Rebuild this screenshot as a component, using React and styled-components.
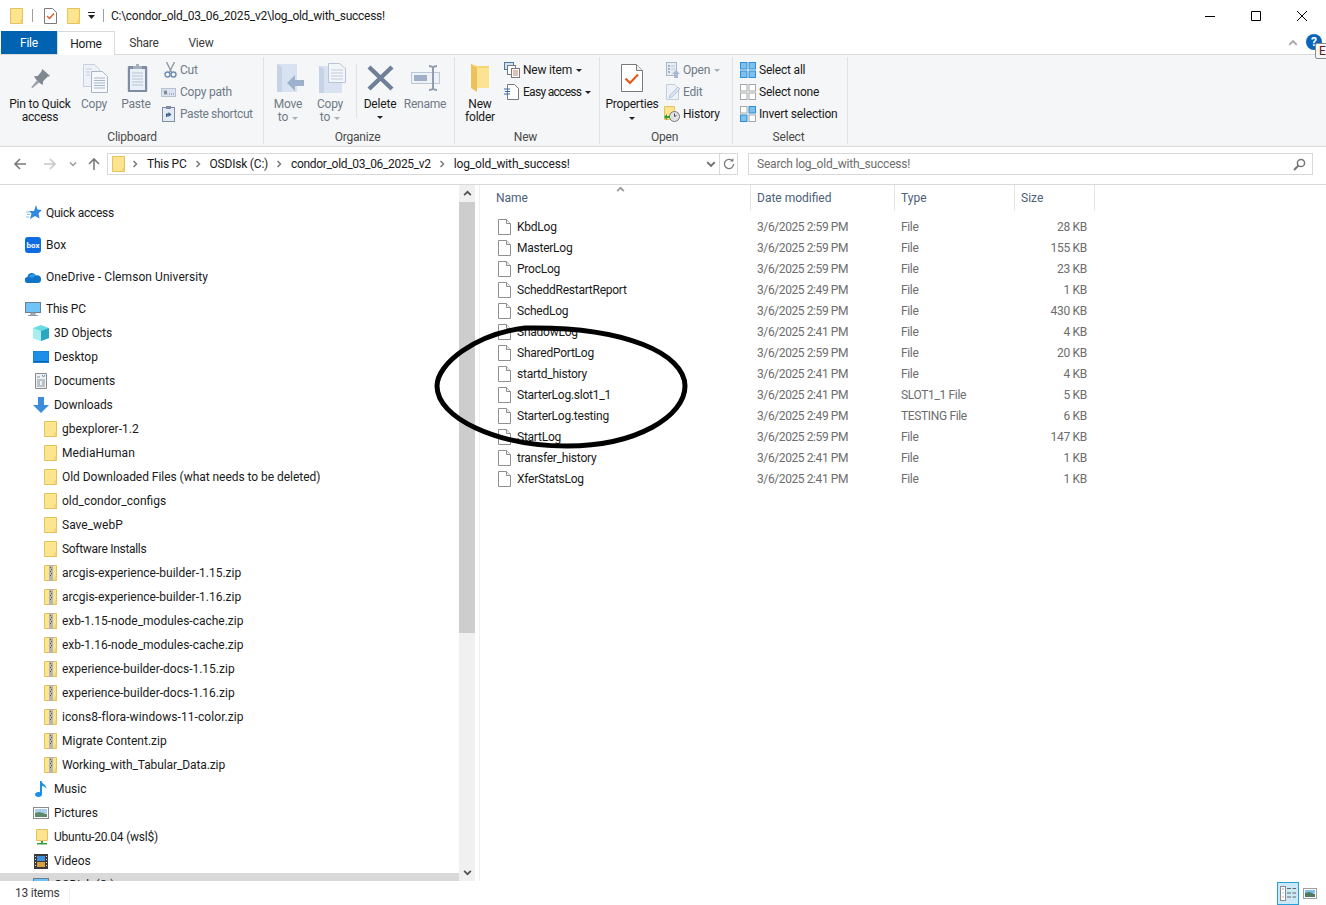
import React from 'react';
import styled, { createGlobalStyle } from 'styled-components';

const GlobalStyle = createGlobalStyle`
  html, body {
    margin: 0;
    padding: 0;
    background: #fff;
    overflow: hidden;
  }
  body {
    font-family: Roboto, "Liberation Sans", sans-serif;
    font-size: 12px;
    color: #1a1a1a;
  }
`;

const Window = styled.div`
  position: relative;
  width: 1326px;
  height: 905px;
  display: flex;
  flex-direction: column;
  overflow: hidden;
  background: #fff;
`;

/* title bar */
const TitleBar = styled.div`
  height: 31px;
  display: flex;
  align-items: center;
  padding-left: 10px;
`;

const QuickIcon = styled.span`
  display: flex;
  margin-right: ${p => p.$gap}px;
`;

const TitleSep = styled.span`
  width: 1px;
  height: 13px;
  background: #a0a0a0;
  margin-right: ${p => p.$gap}px;
`;

const TitleText = styled.span`
  font-size: 12px;
  color: #1a1a1a;
  letter-spacing: -0.27px;
  flex: 1;
`;

const WinButtons = styled.div`
  display: flex;
  align-items: center;
  height: 31px;
  margin-right: 1px;
`;

const WinButton = styled.span`
  width: 46px;
  height: 31px;
  display: flex;
  align-items: center;
  justify-content: center;
`;

/* tabs */
const TabRow = styled.div`
  height: 24px;
  display: flex;
  align-items: stretch;
  padding-left: 1px;
  border-bottom: 1px solid #dadbdc;
  box-sizing: border-box;
  letter-spacing: -0.2px;
`;

const FileTab = styled.div`
  width: 56px;
  height: 23px;
  padding-top: 1px;
  box-sizing: border-box;
  background: #0063b1;
  color: #fff;
  display: flex;
  align-items: center;
  justify-content: center;
`;

const Tab = styled.div`
  width: ${p => p.$w}px;
  height: ${p => (p.$active ? 24 : 23)}px;
  box-sizing: border-box;
  display: flex;
  align-items: center;
  justify-content: center;
  color: ${p => (p.$active ? '#1a1a1a' : '#3b3b3b')};
  background: #fff;
  padding-top: ${p => (p.$active ? 0 : 1)}px;
  ${p => (p.$active ? 'border: 1px solid #dadbdc; border-bottom: 0;' : '')}
  position: relative;
`;

const TabSpacer = styled.div`
  flex: 1;
`;

const CollapseChevron = styled.span`
  display: flex;
  align-items: center;
  margin-right: 28px;
  height: 23px;
`;

/* ribbon */
const Ribbon = styled.div`
  height: 92px;
  background: #f5f6f7;
  border-bottom: 1px solid #dadbdc;
  box-sizing: border-box;
  display: flex;
  padding: 2px 0 0 1px;
  letter-spacing: -0.2px;
`;

const Group = styled.div`
  width: ${p => p.$w}px;
  height: 87px;
  box-sizing: border-box;
  border-right: 1px solid #e1e2e3;
  margin-right: 1px;
  display: flex;
  flex-direction: column;
`;

const GroupBody = styled.div`
  height: 71px;
  display: flex;
  padding-left: ${p => p.$pad || 0}px;
`;

const GroupLabel = styled.div`
  flex: 1;
  display: flex;
  align-items: center;
  justify-content: center;
  color: #4a4a4a;
  padding: 1px ${p => p.$pr || 0}px 0 0;
`;

const LargeButton = styled.div`
  width: ${p => p.$w}px;
  display: flex;
  flex-direction: column;
  align-items: center;
  color: ${p => (p.$off ? '#6f7a87' : '#1a1a1a')};
  line-height: 13px;
  text-align: center;
  white-space: nowrap;
  padding-top: 3px;
  flex: none;
`;

const LargeIcon = styled.span`
  height: 36px;
  display: flex;
  align-items: center;
  justify-content: center;
  flex: none;
  margin: 0 0 2px ${p => p.$dx || 0}px;
`;

const VSep = styled.span`
  width: 1px;
  height: 54px;
  margin: 7px 0 0 5px;
  background: #e1e2e3;
  flex: none;
`;

const SmallStack = styled.div`
  display: flex;
  flex-direction: column;
  padding-top: 2px;
  margin-left: ${p => p.$ml || 0}px;
`;

const SmallButton = styled.div`
  height: 22px;
  display: flex;
  align-items: center;
  white-space: nowrap;
  color: ${p => (p.$off ? '#6f7a87' : '#1a1a1a')};
  letter-spacing: ${p => p.$ls || -0.2}px;
`;

const SmallIcon = styled.span`
  width: ${p => p.$w || 19}px;
  box-sizing: border-box;
  padding-left: ${p => p.$in || 0}px;
  display: flex;
  align-items: center;
`;

const Caret = styled.span`
  display: inline-block;
  width: 0;
  height: 0;
  border-left: 3px solid transparent;
  border-right: 3px solid transparent;
  border-top: 3px solid ${p => p.$c || '#222'};
  margin: ${p => p.$m || '0 0 0 4px'};
`;

/* address row */
const AddressRow = styled.div`
  height: 38px;
  display: flex;
  align-items: flex-start;
  padding: 6px 13px 0 0;
  border-bottom: 1px solid #d9d9d9;
  box-sizing: border-box;
`;

const NavIcons = styled.div`
  width: 107px;
  height: 22px;
  display: flex;
  align-items: center;
  flex: none;
`;

const NavIcon = styled.span`
  display: flex;
  margin-left: ${p => p.$ml}px;
`;

const AddressBox = styled.div`
  width: 631px;
  height: 22px;
  box-sizing: border-box;
  border: 1px solid #d9d9d9;
  display: flex;
  align-items: center;
  padding-left: 4px;
  flex: none;
`;

const Crumb = styled.span`
  color: #1a1a1a;
  white-space: nowrap;
  letter-spacing: ${p => p.$ls}px;
  margin-right: ${p => p.$mr}px;
`;

const CrumbArrow = styled.span`
  display: flex;
  margin: ${p => p.$m};
`;

const AddressEnd = styled.span`
  margin-left: auto;
  display: flex;
  align-items: center;
  height: 20px;
`;

const RefreshCell = styled.span`
  width: 18px;
  height: 20px;
  box-sizing: border-box;
  border-left: 1px solid #d9d9d9;
  margin-left: 3px;
  display: flex;
  align-items: center;
  justify-content: center;
`;

const SearchBox = styled.div`
  margin-left: 10px;
  flex: 1;
  height: 22px;
  box-sizing: border-box;
  border: 1px solid #d9d9d9;
  display: flex;
  align-items: center;
  justify-content: space-between;
  padding: 0 6px 0 8px;
  color: #6d6d6d;
  letter-spacing: -0.2px;
`;

/* body */
const Body = styled.div`
  height: 696px;
  display: flex;
`;

const NavPane = styled.div`
  width: 459px;
  height: 696px;
  overflow: hidden;
  flex: none;
  padding-top: 16px;
  box-sizing: border-box;
  position: relative;
`;

const NavRow = styled.div`
  height: 24px;
  display: flex;
  align-items: center;
  white-space: nowrap;
  padding-left: ${p => p.$indent}px;
  margin-top: ${p => p.$top || 0}px;
  background: ${p => (p.$selected ? '#d9d9d9' : 'transparent')};
  color: #1a1a1a;
  letter-spacing: ${p => p.$ls || 0}px;
`;

const NavGlyph = styled.span`
  width: ${p => p.$w}px;
  height: 16px;
  display: flex;
  align-items: center;
  flex: none;
`;

const Scrollbar = styled.div`
  width: 16px;
  flex: none;
  background: #f0f0f0;
  display: flex;
  flex-direction: column;
  border-right: 2px solid #fff;
  box-shadow: 2px 0 0 #fff, 3px 0 0 #f0f0f0;
`;

const ScrollArrow = styled.div`
  height: 17px;
  display: flex;
  align-items: center;
  justify-content: center;
  flex: none;
  background: #f0f0f0;
`;

const ScrollThumb = styled.div`
  height: 431px;
  background: #cdcdcd;
  flex: none;
`;

const ScrollTrack = styled.div`
  flex: 1;
`;

const ListPane = styled.div`
  flex: 1;
  padding-left: 13px;
  position: relative;
`;

const ListHeader = styled.div`
  height: 31px;
  display: grid;
  grid-template-columns: 261px 144px 120px 80px;
`;

const HeaderCell = styled.div`
  height: 25px;
  box-sizing: border-box;
  padding-left: 6px;
  padding-top: 6px;
  color: #4c607a;
  border-right: 1px solid #e5e5e5;
  position: relative;
`;

const SortChevron = styled.span`
  position: absolute;
  left: 126px;
  top: 0;
  display: flex;
`;

const FileRow = styled.div`
  height: 21px;
  display: grid;
  grid-template-columns: 261px 144px 120px 72px;
  align-items: center;
  color: #6d6d6d;
`;

const FileName = styled.div`
  display: flex;
  align-items: center;
  color: #1a1a1a;
  padding-left: 8px;
  letter-spacing: -0.24px;
`;

const FileGlyph = styled.span`
  width: 19px;
  display: flex;
  flex: none;
`;

const FileCell = styled.div`
  padding-left: 6px;
  letter-spacing: ${p => p.$ls || 0}px;
`;

const SizeCell = styled.div`
  text-align: right;
  letter-spacing: -0.3px;
`;

/* hand drawn ring, sits over the file list */
const Scribble = styled.svg`
  position: absolute;
  left: 425px;
  top: 320px;
  pointer-events: none;
`;

/* status bar */
const StatusBar = styled.div`
  flex: 1;
  display: flex;
  align-items: center;
  padding-left: 15px;
  color: #3b3b3b;
  position: relative;
`;

const StatusCount = styled.span`
  letter-spacing: -0.25px;
`;

const StatusSep = styled.span`
  width: 1px;
  height: 16px;
  background: #f0f0f0;
  margin: 3px 0 0 10px;
`;

const ViewSwitch = styled.div`
  margin-left: auto;
  margin-right: 9px;
  display: flex;
  align-items: center;
  gap: 4px;
`;

const ViewButton = styled.span`
  width: ${p => (p.$active ? 22 : 14)}px;
  height: ${p => (p.$active ? 23 : 11)}px;
  box-sizing: border-box;
  display: flex;
  align-items: center;
  justify-content: center;
  ${p => (p.$active ? 'border: 1px solid #26a0da; background: #cbe8f6;' : '')}
`;

const HelpBadge = styled.span`
  position: absolute;
  left: 1306px;
  top: 34px;
  width: 16px;
  height: 16px;
  border-radius: 50%;
  background: #0a64b8;
  color: #fff;
  font-weight: 700;
  font-size: 12px;
  line-height: 16px;
  text-align: center;
`;

const TipBox = styled.span`
  position: absolute;
  left: 1315px;
  top: 43px;
  width: 14px;
  height: 16px;
  box-sizing: border-box;
  background: #f7f7f7;
  border: 1px solid #8a8a8a;
  border-radius: 2px;
  color: #5a2020;
  font-size: 12px;
  line-height: 14px;
  padding-left: 3px;
`;

/* icons */
const Folder = ({ s = 1 }) => (
  <svg width={13 * s} height={16 * s} viewBox="0 0 13 16">
    <path d="M.5.5h12v15H.5z" fill="#fde58f" stroke="#e6c25c" />
    <path d="M10.5 11.5h2v4h-2z" fill="#f2cf6d" />
  </svg>
);

const TitleDoc = () => (
  <svg width="13" height="16" viewBox="0 0 13 16">
    <path d="M.5.5h8l4 4v11H.5z" fill="#fff" stroke="#7a7a7a" />
    <path d="M3 8l2.5 2.5L10 5.5" fill="none" stroke="#e2572b" strokeWidth="1.4" />
  </svg>
);

const ZipFolder = () => (
  <svg width="13" height="16" viewBox="0 0 13 16">
    <path d="M.5.5h12v15H.5z" fill="#fde58f" stroke="#e6c25c" />
    <path d="M5 0h4v16H5z" fill="#b4b4b4" />
    <path d="M6 2h1v1H6zm1 2h1v1H7zM6 6h1v1H6zm1 2h1v1H7zm-1 2h1v1H6z" fill="#555" />
    <path d="M10.5 11.5h2v4h-2z" fill="#f2cf6d" />
  </svg>
);

const FileIcon = () => (
  <svg width="13" height="16" viewBox="0 0 13 16">
    <path d="M.5.5h8l4 4v11H.5z" fill="#fff" stroke="#8f8f8f" />
    <path d="M8.5.5v4h4" fill="#f0f0f0" stroke="#8f8f8f" />
  </svg>
);

const Chevron = ({ dir = 'right', c = '#7a7a7a', size = 8 }) => {
  const paths = {
    right: 'M2.5 1L5.5 4l-3 3',
    down: 'M1 2.5L4 5.5l3-3',
    up: 'M1 5.5L4 2.5l3 3',
  };
  return (
    <svg width={size} height={size} viewBox="0 0 8 8">
      <path d={paths[dir]} fill="none" stroke={c} strokeWidth="1.5" />
    </svg>
  );
};

const Arrow = ({ c, rot = 0 }) => (
  <svg width="14" height="14" viewBox="0 0 14 14" style={{ transform: `rotate(${rot}deg)` }}>
    <path d="M13 7H2M7 2L2 7l5 5" fill="none" stroke={c} strokeWidth="1.6" />
  </svg>
);

const PinIcon = () => (
  <svg width="21" height="21" viewBox="0 0 24 24">
    <path d="M14 1l9 8-3 1-5 5-.5 4.500L11 17l-4-4-2.500-3.500L9 9l4-5z" fill="#7f8890" />
    <path d="M8 14l-6.500 8 1 1 8-6.500z" fill="#9aa1a8" />
  </svg>
);

const CopyIcon = () => (
  <svg width="25" height="29" viewBox="0 0 25 29">
    <path d="M.5.500h11l5 5v17H.5z" fill="#eef2f8" stroke="#c6d0de" />
    <path d="M8.500 7.500h11l5 5v16h-16z" fill="#f6f8fb" stroke="#a9b6c8" />
    <path d="M11 14h11M11 16.500h11M11 19h11M11 21.500h11M11 24h11" stroke="#a9b6c8" />
    <path d="M3 5h6M3 8h4M3 11h4" stroke="#c6d0de" />
  </svg>
);

const PasteIcon = () => (
  <svg width="21" height="30" viewBox="0 0 21 30">
    <rect x=".8" y="3" width="19.400" height="26" rx="1" fill="#7e8da4" />
    <rect x="3" y="6" width="15" height="21" fill="#eaf0f8" />
    <path d="M5 10h11M5 13h11M5 16h11M5 19h11M5 22h11" stroke="#b5c3d6" />
    <path d="M6 6V3h3V1h3v2h3v3z" fill="#a4aebd" />
  </svg>
);

const CutIcon = () => (
  <svg width="13" height="16" viewBox="0 0 13 16">
    <path d="M2.500 0l5 10M10.500 0l-5 10" stroke="#8f98a3" strokeWidth="1.400" />
    <circle cx="3.500" cy="12.500" r="2.500" fill="none" stroke="#6f8db3" strokeWidth="1.400" />
    <circle cx="9.500" cy="12.500" r="2.500" fill="none" stroke="#6f8db3" strokeWidth="1.400" />
  </svg>
);

const CopyPathIcon = () => (
  <svg width="15" height="9" viewBox="0 0 15 9">
    <rect x=".5" y=".5" width="14" height="8" fill="#dbe4f0" stroke="#b6c2d2" />
    <path d="M3 2.500l1 4 1-4 1 4M8 6h1M10 6h1M12 6h1" stroke="#5a6a7e" fill="none" strokeWidth=".8" />
  </svg>
);

const PasteShortcutIcon = () => (
  <svg width="13" height="16" viewBox="0 0 13 16">
    <rect x=".5" y="1.500" width="12" height="14" fill="#e3eaf4" stroke="#7e8da4" />
    <path d="M4 0h5v3H4z" fill="#7e8da4" />
    <path d="M4 11V7.500h2.500V6l3 2.500-3 2.500V9.500H5.500V11z" fill="#3f5f88" />
  </svg>
);

const MoveIcon = () => (
  <svg width="27" height="28" viewBox="0 0 27 28">
    <path d="M0 0h20v28H0z" fill="#d8e2f0" />
    <path d="M0 0l5 3v25H0z" fill="#c6d3e6" />
    <path d="M10 19l8-8v5h9v6h-9v5z" fill="#9eb1ca" />
  </svg>
);

const CopyToIcon = () => (
  <svg width="27" height="30" viewBox="0 0 27 30">
    <path d="M0 3h23v27H0z" fill="#d8e2f0" />
    <path d="M0 3l5 3v24H0z" fill="#c6d3e6" />
    <path d="M9.500.500h11l6 5v14h-17z" fill="#f2f5fa" stroke="#b9c5d6" />
    <path d="M12 7h12M12 10h12M12 13h12M12 16h12" stroke="#c2cddc" />
  </svg>
);

const DeleteIcon = () => (
  <svg width="27" height="26" viewBox="0 0 27 26">
    <path d="M2 2l23 22M25 2L2 24" stroke="#6f7f97" strokeWidth="4.400" />
  </svg>
);

const RenameIcon = () => (
  <svg width="29" height="26" viewBox="0 0 29 26">
    <rect x=".5" y="7.500" width="28" height="11" fill="#eef2f7" stroke="#bcc8d8" />
    <rect x="3" y="10" width="13" height="6" fill="#9fb0c8" />
    <path d="M18 1c2 0 3 1 4 1s2-1 4-1M18 25c2 0 3-1 4-1s2 1 4 1M22 2v22" fill="none" stroke="#8f9cb0" strokeWidth="2" />
  </svg>
);

const NewFolderIcon = () => (
  <svg width="18" height="28" viewBox="0 0 18 28">
    <path d="M0 0l6 2h12v22H0z" fill="#f7d774" />
    <path d="M0 0l6 4v24l-6-4z" fill="#eec25a" />
    <path d="M6 4h12v20H6z" fill="#fbe391" />
  </svg>
);

const NewItemIcon = () => (
  <svg width="16" height="16" viewBox="0 0 16 16">
    <rect x=".5" y=".5" width="9" height="7" fill="#cfe3f5" stroke="#4a7ba7" />
    <rect x="3.500" y="3.500" width="8" height="9" fill="#fff" stroke="#7a7a7a" />
    <rect x="7.500" y="6.500" width="8" height="9" fill="#fff" stroke="#7a7a7a" />
    <path d="M9 9h5M9 11h5M9 13h5" stroke="#d07a6a" />
  </svg>
);

const EasyAccessIcon = () => (
  <svg width="15" height="16" viewBox="0 0 15 16">
    <path d="M3.500.500h7l4 4v11h-11z" fill="#fff" stroke="#7a7a7a" />
    <path d="M0 5h6M1 7.500h5M0 10h6" stroke="#2f6ea8" />
  </svg>
);

const PropertiesIcon = () => (
  <svg width="22" height="28" viewBox="0 0 22 28">
    <path d="M.5.500h15l6 6v21H.5z" fill="#fff" stroke="#7a7a7a" />
    <path d="M15.500.500v6h6" fill="#eee" stroke="#7a7a7a" />
    <path d="M4.500 14.500l4.500 4.500L17 10.500" fill="none" stroke="#e8591f" strokeWidth="2.200" />
  </svg>
);

const OpenIcon = () => (
  <svg width="14" height="16" viewBox="0 0 14 16">
    <rect x=".5" y=".5" width="10" height="13" fill="#e8edf4" stroke="#a9b6c8" />
    <path d="M2 3h2v2H2zm0 3h2v2H2zm0 3h2v2H2z" fill="#9fb0c8" />
    <path d="M5 4h4M5 7h4" stroke="#b9c5d6" />
    <path d="M10 8l4 4h-2v4H8v-4H6z" fill="#a9bad0" />
  </svg>
);

const EditIcon = () => (
  <svg width="14" height="16" viewBox="0 0 14 16">
    <path d="M.5.500h8l4 4v11H.5z" fill="#edf2f8" stroke="#c3cedd" />
    <path d="M3 14l1-3 8-8 2 2-8 8z" fill="#d8e3f1" stroke="#a9b9cd" strokeWidth=".7" />
  </svg>
);

const HistoryIcon = () => (
  <svg width="16" height="16" viewBox="0 0 16 16">
    <path d="M.5.500h10v13H.5z" fill="#fde58f" stroke="#e6c25c" />
    <circle cx="10.500" cy="10.500" r="5" fill="#e3e3e3" stroke="#7a7a7a" />
    <path d="M10.500 7.500v3l2-1" fill="none" stroke="#555" />
    <path d="M0 11l3-3v2h3v2H3v2z" fill="#2f9e3f" />
  </svg>
);

const Grid = ({ cells }) => (
  <svg width="16" height="16" viewBox="0 0 16 16">
    {[[0, 0], [8.500, 0], [0, 8.500], [8.500, 8.500]].map(([x, y], i) => (
      <rect
        key={i}
        x={x + 0.5}
        y={y + 0.5}
        width="6.500"
        height="6.500"
        fill={cells[i] ? '#7cc0ee' : '#fff'}
        stroke={cells[i] ? '#2f8fd6' : '#a8a8a8'}
      />
    ))}
  </svg>
);

const RefreshIcon = () => (
  <svg width="12" height="12" viewBox="0 0 12 12">
    <path d="M9.500 3A4.600 4.600 0 1 0 10.600 6" fill="none" stroke="#7a7a7a" strokeWidth="1.300" />
    <path d="M7 3.400h3.400V0z" fill="#7a7a7a" />
  </svg>
);

const SearchIcon = () => (
  <svg width="13" height="13" viewBox="0 0 13 13">
    <circle cx="8" cy="5" r="3.600" fill="none" stroke="#757575" strokeWidth="1.500" />
    <path d="M5.500 7.500L1 12" stroke="#757575" strokeWidth="2" />
  </svg>
);

const StarIcon = () => (
  <svg width="16" height="16" viewBox="0 0 16 16">
    <path d="M10 0l1.500 4.500L16 5l-3.500 3.200 1 5.300L9 11l-5 3 1.500-5.500L3 6h5z" fill="#2f8ae0" />
    <path d="M0 7h4M1 9.500h3M0 12h3" stroke="#8fbce8" />
  </svg>
);

const BoxIcon = () => (
  <svg width="16" height="16" viewBox="0 0 16 16">
    <rect width="16" height="16" rx="3" fill="#0f6be0" />
    <text x="8" y="10.500" textAnchor="middle" fontSize="8" fontWeight="700" fontFamily="Roboto, sans-serif" fill="#fff">box</text>
  </svg>
);

const CloudIcon = () => (
  <svg width="16" height="11" viewBox="0 0 16 11">
    <path d="M3 11a3 3 0 0 1-.5-6A4.500 4.500 0 0 1 11 3.500 3.800 3.800 0 0 1 16 8c0 2-1.500 3-3 3z" fill="#0f74c8" />
    <path d="M4 5a4 4 0 0 1 7-1.500L7 6z" fill="#2c9ae8" />
  </svg>
);

const PcIcon = () => (
  <svg width="16" height="15" viewBox="0 0 16 15">
    <rect x=".5" y=".5" width="15" height="10" fill="#6fc3f5" stroke="#6b7f90" />
    <path d="M6 11h4v2H6zM3 13.500h10" stroke="#8a9aa8" fill="#b8c4cf" />
  </svg>
);

const CubeIcon = () => (
  <svg width="16" height="16" viewBox="0 0 16 16">
    <path d="M8 0l8 3v10l-8 3-8-3V3z" fill="#6adbe0" />
    <path d="M8 6l8-3v10l-8 3z" fill="#2ba7c2" />
    <path d="M0 3l8 3v10l-8-3z" fill="#a8eef0" />
  </svg>
);

const DesktopIcon = () => (
  <svg width="16" height="12" viewBox="0 0 16 12">
    <rect width="16" height="12" fill="#1e8fe8" />
    <path d="M.5 10.500h15" stroke="#0b5fb0" />
    <path d="M0 0h16v12H0z" fill="none" stroke="#0f74c8" />
  </svg>
);

const DocumentsIcon = () => (
  <svg width="12" height="16" viewBox="0 0 12 16">
    <path d="M.5.500h11v15H.5z" fill="#f2f2f2" stroke="#8a8a8a" />
    <path d="M2 4h3M2 7h8M2 9h3M7 9h3M2 11h3M7 11h3M2 13h8" stroke="#8094a8" />
    <path d="M7 2l1.500 2L10 2" stroke="#3f8fdc" fill="none" />
  </svg>
);

const DownloadIcon = () => (
  <svg width="16" height="16" viewBox="0 0 16 16">
    <path d="M5 0h6v8h5l-8 8-8-8h5z" fill="#3b8ddc" />
  </svg>
);

const MusicIcon = () => (
  <svg width="12" height="16" viewBox="0 0 12 16">
    <path d="M5 0h1.500c.5 3 5 3.500 5 8-1-2-3-3-4.500-3v8.500C7 15 5.500 16 3.500 16S0 15 0 13.500 1.500 11 3.500 11c.5 0 1 0 1.500.2z" fill="#1b8fe8" />
  </svg>
);

const PicturesIcon = () => (
  <svg width="16" height="12" viewBox="0 0 16 12">
    <rect x=".5" y=".5" width="15" height="11" fill="#fff" stroke="#8a8a8a" />
    <path d="M2 2h12v4H2z" fill="#a8d0ee" />
    <path d="M2 6l4-1 4 1 4 1v3H2z" fill="#5f8a6a" />
  </svg>
);

const DriveIcon = () => (
  <svg width="14" height="16" viewBox="0 0 14 16">
    <path d="M1.500.500h11v11h-11z" fill="#fde58f" stroke="#e6c25c" />
    <path d="M6 12h2v2H6zM2 14h10v1.500H2z" fill="#34a33a" />
  </svg>
);

const VideosIcon = () => (
  <svg width="14" height="15" viewBox="0 0 14 15">
    <rect width="14" height="15" fill="#3a3a3a" />
    <path d="M3 2h8v5H3z" fill="#3f8fdc" />
    <path d="M3 8h8v5H3z" fill="#d8a040" />
    <path d="M1 2h1v1H1zm0 3h1v1H1zm0 3h1v1H1zm0 3h1v1H1zm11-9h1v1h-1zm0 3h1v1h-1zm0 3h1v1h-1zm0 3h1v1h-1z" fill="#ddd" />
  </svg>
);

const DetailsViewIcon = () => (
  <svg width="16" height="15" viewBox="0 0 16 15">
    <rect x=".5" y=".5" width="5" height="14" fill="#fff" stroke="#8a8a8a" />
    <path d="M2.500 2.500h1v1h-1z" fill="#555" />
    <path d="M2.500 6.500h1v1h-1z" fill="#3f8fdc" />
    <path d="M2.500 10.500h1v1h-1z" fill="#d83a2a" />
    <path d="M7 2.500h4M12.500 2.500H16M7 7h4M12.500 7H16M7 11h4M12.500 11H16" stroke="#666" />
  </svg>
);

const LargeViewIcon = () => (
  <svg width="14" height="11" viewBox="0 0 14 11">
    <rect x=".5" y=".5" width="13" height="10" fill="#fff" stroke="#a0a0a0" />
    <path d="M2 2h10v3H2z" fill="#7cc0ee" />
    <path d="M2 5l4-1 6 2v3H2z" fill="#4f7a5f" />
  </svg>
);

const navItems = [
  { label: 'Quick access', indent: 26, w: 20, ls: -0.25, icon: <StarIcon /> },
  { label: 'Box', indent: 25, w: 21, top: 8, icon: <BoxIcon /> },
  { label: 'OneDrive - Clemson University', indent: 25, w: 21, top: 8, ls: 0.07, icon: <CloudIcon /> },
  { label: 'This PC', indent: 25, w: 21, top: 8, ls: -0.2, icon: <PcIcon /> },
  { label: '3D Objects', indent: 33, w: 21, icon: <CubeIcon /> },
  { label: 'Desktop', indent: 33, w: 21, icon: <DesktopIcon /> },
  { label: 'Documents', indent: 35, w: 19, icon: <DocumentsIcon /> },
  { label: 'Downloads', indent: 33, w: 21, ls: -0.1, icon: <DownloadIcon /> },
  { label: 'gbexplorer-1.2', indent: 44, w: 18, icon: <Folder /> },
  { label: 'MediaHuman', indent: 44, w: 18, ls: 0.1, icon: <Folder /> },
  { label: 'Old Downloaded Files (what needs to be deleted)', indent: 44, w: 18, ls: -0.04, icon: <Folder /> },
  { label: 'old_condor_configs', indent: 44, w: 18, icon: <Folder /> },
  { label: 'Save_webP', indent: 44, w: 18, icon: <Folder /> },
  { label: 'Software Installs', indent: 44, w: 18, ls: -0.3, icon: <Folder /> },
  { label: 'arcgis-experience-builder-1.15.zip', indent: 44, w: 18, icon: <ZipFolder /> },
  { label: 'arcgis-experience-builder-1.16.zip', indent: 44, w: 18, icon: <ZipFolder /> },
  { label: 'exb-1.15-node_modules-cache.zip', indent: 44, w: 18, icon: <ZipFolder /> },
  { label: 'exb-1.16-node_modules-cache.zip', indent: 44, w: 18, icon: <ZipFolder /> },
  { label: 'experience-builder-docs-1.15.zip', indent: 44, w: 18, icon: <ZipFolder /> },
  { label: 'experience-builder-docs-1.16.zip', indent: 44, w: 18, icon: <ZipFolder /> },
  { label: 'icons8-flora-windows-11-color.zip', indent: 44, w: 18, ls: 0.08, icon: <ZipFolder /> },
  { label: 'Migrate Content.zip', indent: 44, w: 18, icon: <ZipFolder /> },
  { label: 'Working_with_Tabular_Data.zip', indent: 44, w: 18, ls: -0.1, icon: <ZipFolder /> },
  { label: 'Music', indent: 35, w: 19, icon: <MusicIcon /> },
  { label: 'Pictures', indent: 33, w: 21, icon: <PicturesIcon /> },
  { label: 'Ubuntu-20.04 (wsl$)', indent: 35, w: 19, ls: -0.2, icon: <DriveIcon /> },
  { label: 'Videos', indent: 34, w: 20, icon: <VideosIcon /> },
  { label: 'OSDisk (C:)', indent: 33, w: 21, selected: true, icon: <PcIcon /> },
];

const files = [
  ['KbdLog', '3/6/2025 2:59 PM', 'File', '28 KB'],
  ['MasterLog', '3/6/2025 2:59 PM', 'File', '155 KB'],
  ['ProcLog', '3/6/2025 2:59 PM', 'File', '23 KB'],
  ['ScheddRestartReport', '3/6/2025 2:49 PM', 'File', '1 KB'],
  ['SchedLog', '3/6/2025 2:59 PM', 'File', '430 KB'],
  ['ShadowLog', '3/6/2025 2:41 PM', 'File', '4 KB'],
  ['SharedPortLog', '3/6/2025 2:59 PM', 'File', '20 KB'],
  ['startd_history', '3/6/2025 2:41 PM', 'File', '4 KB'],
  ['StarterLog.slot1_1', '3/6/2025 2:41 PM', 'SLOT1_1 File', '5 KB'],
  ['StarterLog.testing', '3/6/2025 2:49 PM', 'TESTING File', '6 KB'],
  ['StartLog', '3/6/2025 2:59 PM', 'File', '147 KB'],
  ['transfer_history', '3/6/2025 2:41 PM', 'File', '1 KB'],
  ['XferStatsLog', '3/6/2025 2:41 PM', 'File', '1 KB'],
];

const App = () => (
  <Window>
    <GlobalStyle />

    <TitleBar>
      <QuickIcon $gap={9}><Folder /></QuickIcon>
      <TitleSep $gap={11} />
      <QuickIcon $gap={10}><TitleDoc /></QuickIcon>
      <QuickIcon $gap={8}><Folder /></QuickIcon>
      <QuickIcon $gap={8}>
        <svg width="7" height="7" viewBox="0 0 7 7"><path d="M0 0h7v1H0zM0 3h7L3.500 7z" fill="#222" /></svg>
      </QuickIcon>
      <TitleSep $gap={7} />
      <TitleText>C:\condor_old_03_06_2025_v2\log_old_with_success!</TitleText>
      <WinButtons>
        <WinButton>
          <svg width="10" height="10" viewBox="0 0 10 10"><path d="M0 5.500h10" stroke="#000" /></svg>
        </WinButton>
        <WinButton>
          <svg width="10" height="10" viewBox="0 0 10 10"><path d="M.5.500h9v9h-9z" fill="none" stroke="#000" /></svg>
        </WinButton>
        <WinButton>
          <svg width="10" height="10" viewBox="0 0 10 10"><path d="M0 0l10 10M10 0L0 10" stroke="#000" /></svg>
        </WinButton>
      </WinButtons>
    </TitleBar>

    <TabRow>
      <FileTab>File</FileTab>
      <Tab $w={58} $active>Home</Tab>
      <Tab $w={58}>Share</Tab>
      <Tab $w={56}>View</Tab>
      <TabSpacer />
      <CollapseChevron><Chevron dir="up" c="#a8a8a8" size={10} /></CollapseChevron>
    </TabRow>

    <Ribbon>
      <Group $w={263}>
        <GroupBody $pad={2}>
          <LargeButton $w={74}>
            <LargeIcon><PinIcon /></LargeIcon>
            Pin to Quick<br />access
          </LargeButton>
          <LargeButton $w={34} $off>
            <LargeIcon $dx={2}><CopyIcon /></LargeIcon>
            Copy
          </LargeButton>
          <LargeButton $w={50} $off>
            <LargeIcon $dx={2}><PasteIcon /></LargeIcon>
            Paste
          </LargeButton>
          <SmallStack>
            <SmallButton $off><SmallIcon $in={3}><CutIcon /></SmallIcon>Cut</SmallButton>
            <SmallButton $off><SmallIcon><CopyPathIcon /></SmallIcon>Copy path</SmallButton>
            <SmallButton $off $ls={-0.4}><SmallIcon $in={1}><PasteShortcutIcon /></SmallIcon>Paste shortcut</SmallButton>
          </SmallStack>
        </GroupBody>
        <GroupLabel>Clipboard</GroupLabel>
      </Group>

      <Group $w={190}>
        <GroupBody $pad={2}>
          <LargeButton $w={42} $off>
            <LargeIcon $dx={5}><MoveIcon /></LargeIcon>
            Move
            <span>to<Caret $c="#a8b0ba" $m="0 0 1px 4px" /></span>
          </LargeButton>
          <LargeButton $w={42} $off>
            <LargeIcon $dx={5}><CopyToIcon /></LargeIcon>
            Copy
            <span>to<Caret $c="#a8b0ba" $m="0 0 1px 4px" /></span>
          </LargeButton>
          <VSep />
          <LargeButton $w={46}>
            <LargeIcon><DeleteIcon /></LargeIcon>
            Delete
            <Caret $m="5px 0 0" />
          </LargeButton>
          <LargeButton $w={44} $off>
            <LargeIcon><RenameIcon /></LargeIcon>
            Rename
          </LargeButton>
        </GroupBody>
        <GroupLabel $pr={4}>Organize</GroupLabel>
      </Group>

      <Group $w={144}>
        <GroupBody $pad={6}>
          <LargeButton $w={36}>
            <LargeIcon><NewFolderIcon /></LargeIcon>
            New<br />folder
          </LargeButton>
          <SmallStack $ml={6}>
            <SmallButton><SmallIcon><NewItemIcon /></SmallIcon>New item<Caret /></SmallButton>
            <SmallButton $ls={-0.7}><SmallIcon><EasyAccessIcon /></SmallIcon>Easy access<Caret /></SmallButton>
          </SmallStack>
        </GroupBody>
        <GroupLabel $pr={4}>New</GroupLabel>
      </Group>

      <Group $w={132}>
        <GroupBody $pad={4}>
          <LargeButton $w={54}>
            <LargeIcon><PropertiesIcon /></LargeIcon>
            Properties
            <Caret $m="6px 0 0" />
          </LargeButton>
          <SmallStack $ml={4}>
            <SmallButton $off><SmallIcon $w={20} $in={3}><OpenIcon /></SmallIcon>Open<Caret $c="#a8b0ba" /></SmallButton>
            <SmallButton $off><SmallIcon $w={20} $in={3}><EditIcon /></SmallIcon>Edit</SmallButton>
            <SmallButton><SmallIcon $w={20} $in={1}><HistoryIcon /></SmallIcon>History</SmallButton>
          </SmallStack>
        </GroupBody>
        <GroupLabel $pr={4}>Open</GroupLabel>
      </Group>

      <Group $w={114}>
        <GroupBody $pad={6}>
          <SmallStack>
            <SmallButton><SmallIcon><Grid cells={[1, 1, 1, 1]} /></SmallIcon>Select all</SmallButton>
            <SmallButton><SmallIcon><Grid cells={[0, 0, 0, 0]} /></SmallIcon>Select none</SmallButton>
            <SmallButton><SmallIcon><Grid cells={[0, 1, 1, 0]} /></SmallIcon>Invert selection</SmallButton>
          </SmallStack>
        </GroupBody>
        <GroupLabel $pr={4}>Select</GroupLabel>
      </Group>
    </Ribbon>

    <AddressRow>
      <NavIcons>
        <NavIcon $ml={13}><Arrow c="#7a7a7a" /></NavIcon>
        <NavIcon $ml={16}><Arrow c="#c8c8c8" rot={180} /></NavIcon>
        <NavIcon $ml={12}><Chevron dir="down" c="#9a9a9a" /></NavIcon>
        <NavIcon $ml={10}><Arrow c="#7a7a7a" rot={90} /></NavIcon>
      </NavIcons>
      <AddressBox>
        <Folder />
        <CrumbArrow $m="0 8px 0 6px"><Chevron /></CrumbArrow>
        <Crumb $mr={7} $ls={-0.25}>This PC</Crumb>
        <CrumbArrow $m="0 8px 0 0"><Chevron /></CrumbArrow>
        <Crumb $mr={7} $ls={-0.2}>OSDIsk (C:)</Crumb>
        <CrumbArrow $m="0 8px 0 0"><Chevron /></CrumbArrow>
        <Crumb $mr={7} $ls={-0.33}>condor_old_03_06_2025_v2</Crumb>
        <CrumbArrow $m="0 8px 0 0"><Chevron /></CrumbArrow>
        <Crumb $mr={0} $ls={-0.14}>log_old_with_success!</Crumb>
        <AddressEnd>
          <Chevron dir="down" c="#6d6d6d" size={10} />
          <RefreshCell><RefreshIcon /></RefreshCell>
        </AddressEnd>
      </AddressBox>
      <SearchBox>
        Search log_old_with_success!
        <SearchIcon />
      </SearchBox>
    </AddressRow>

    <Body>
      <NavPane>
        {navItems.map(item => (
          <NavRow key={item.label} $indent={item.indent} $top={item.top} $ls={item.ls} $selected={item.selected}>
            <NavGlyph $w={item.w}>{item.icon}</NavGlyph>
            {item.label}
          </NavRow>
        ))}
      </NavPane>
      <Scrollbar>
        <ScrollArrow><Chevron dir="up" c="#505050" size={9} /></ScrollArrow>
        <ScrollThumb />
        <ScrollTrack />
        <ScrollArrow><Chevron dir="down" c="#505050" size={9} /></ScrollArrow>
      </Scrollbar>
      <ListPane>
        <ListHeader>
          <HeaderCell>
            Name
            <SortChevron><Chevron dir="up" c="#9a9a9a" size={9} /></SortChevron>
          </HeaderCell>
          <HeaderCell>Date modified</HeaderCell>
          <HeaderCell>Type</HeaderCell>
          <HeaderCell>Size</HeaderCell>
        </ListHeader>
        {files.map(([name, date, type, size]) => (
          <FileRow key={name}>
            <FileName>
              <FileGlyph><FileIcon /></FileGlyph>
              {name}
            </FileName>
            <FileCell $ls={-0.4}>{date}</FileCell>
            <FileCell $ls={-0.35}>{type}</FileCell>
            <SizeCell>{size}</SizeCell>
          </FileRow>
        ))}
      </ListPane>
    </Body>

    <StatusBar>
      <StatusCount>13 items</StatusCount>
      <StatusSep />
      <ViewSwitch>
        <ViewButton $active><DetailsViewIcon /></ViewButton>
        <ViewButton><LargeViewIcon /></ViewButton>
      </ViewSwitch>
    </StatusBar>

    <HelpBadge>?</HelpBadge>
    <TipBox>E</TipBox>

    <Scribble width="270" height="135" viewBox="0 0 270 135">
      <path
        d="M100 8C50 14 12 44 12 66c0 32 60 60 130 60 70 0 118-30 118-60C260 34 200 6 100 8z"
        fill="none"
        stroke="#000"
        strokeWidth="5"
      />
    </Scribble>
  </Window>
);

export default App;
